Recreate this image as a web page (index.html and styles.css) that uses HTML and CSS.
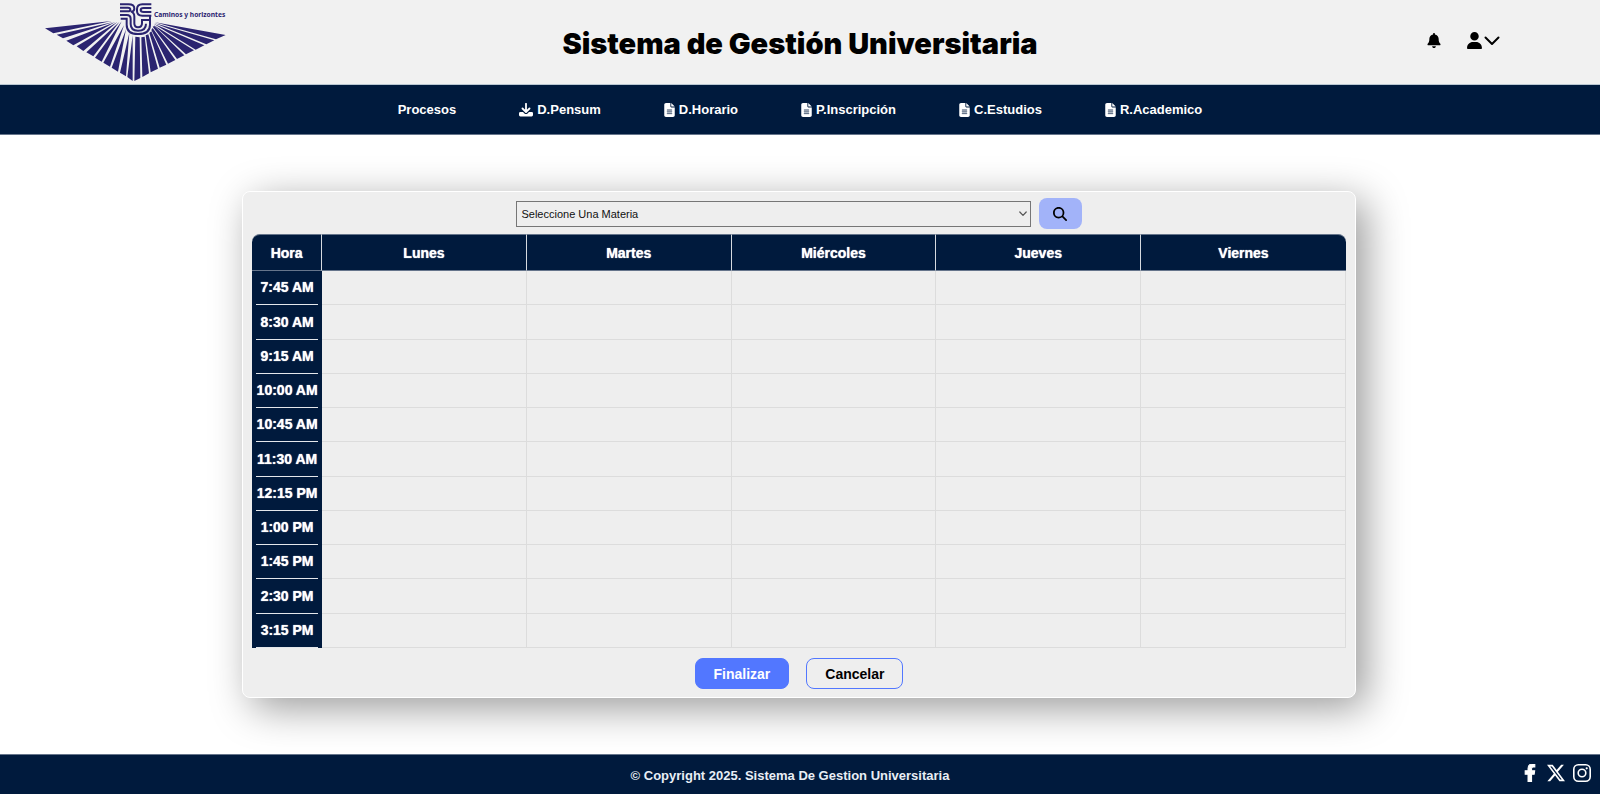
FILE: index.html
```html
<!DOCTYPE html>
<html lang="es">
<head>
<meta charset="utf-8">
<meta name="viewport" content="width=device-width, initial-scale=1">
<title>Sistema de Gestión Universitaria</title>
<link rel="stylesheet" href="styles.css">
</head>
<body>
<svg class="sprite" aria-hidden="true">
  <symbol id="file" viewBox="0 0 384 512"><path fill-rule="evenodd" d="M64 0C28.700 0 0 28.700 0 64V448c0 35.300 28.700 64 64 64H320c35.300 0 64-28.700 64-64V160H256c-17.700 0-32-14.300-32-32V0H64zM256 0V128H384L256 0z"/><path fill="#66758b" d="M112 240H272a16 16 0 0 1 0 32H112a16 16 0 0 1 0-32zM112 304H272a16 16 0 0 1 0 32H112a16 16 0 0 1 0-32zM112 368H272a16 16 0 0 1 0 32H112a16 16 0 0 1 0-32z" stroke="#66758b" stroke-width="12"/></symbol>
</svg>
<header class="top">
  <a class="logo" href="#" aria-label="Inicio">
    <svg viewBox="0 0 200 84" width="200" height="84">
      <g fill="#2b2470" transform="translate(-5 0) scale(.33333)">
        <path d="M45 85L245 63L70 100ZM80 104L250 66L99 115ZM109 122L256 66L130 136ZM140 139L262 66L160 153ZM169 157L268 66L190 169ZM195 173L275 64L215 185ZM220 188L282 76L240 200ZM245 203L288 88L264 215ZM270 218L298 98L288 229ZM292 231L308 106L308 243Z"/>
        <path d="M313 243L316 110L329 112L331 234ZM337 231L334 112L344 110L357 220ZM362 217L347 106L355 103L384 206ZM389 203L358 99L364 94L409 194ZM414 191L364 90L368 84L436 180ZM441 177L368 80L373 78L463 166ZM468 163L371 75L492 151ZM497 149L371 71L523 136ZM529 133L373 69L553 121ZM558 118L375 67L587 105Z"/>
        <g fill="none" stroke="#2b2470" stroke-width="6">
          <path d="M270 13H295Q313 13 313 26Q313 34 303 35Q313 38 313 50V70Q313 82 324 82Q336 82 336 70V60H361M270 23H294Q301 23 301 29Q301 34 293 34H270M270 45H290Q302 45 302 57V72Q302 92 324 92Q348 92 348 71"/>
          <path d="M364 13H337Q321 13 321 28V33Q321 47 337 47H364M364 24H341Q332 24 332 30Q332 36 341 36H364M360 47V74Q360 102 324 102Q290 102 290 74V56H272"/>
        </g>
        <text class="motto" x="372" y="50">Caminos y horizontes</text>
      </g>
    </svg>
  </a>
  <h1 class="title">Sistema de Gestión Universitaria</h1>
  <div class="tools">
    <button class="icon-button" type="button" aria-label="Notificaciones"><svg width="14" height="15" viewBox="0 0 448 512"><path d="M224 0c-17.700 0-32 14.300-32 32v19C119 66 64 131 64 208v19c0 47-17 92-48 128l-8 8c-8 10-10 23-5 34s16 19 29 19h384c13 0 24-7 29-19s3-25-5-34l-8-8c-31-36-48-81-48-128v-19c0-77-55-142-128-157V32c0-18-14-32-32-32zM288 448H160c0 36 29 64 64 64s64-28 64-64z"/></svg></button>
    <button class="icon-button" type="button" aria-label="Cuenta"><svg width="15" height="17" viewBox="0 0 448 512"><path d="M224 256a128 128 0 1 0 0-256 128 128 0 1 0 0 256zm-46 48C80 304 0 384 0 482c0 17 13 30 30 30h388c17 0 30-13 30-30 0-98-80-178-178-178z"/></svg><svg class="chevron" width="16" height="10" viewBox="0 0 16 10"><path class="line" d="M1.500 1.500L8 8L14.500 1.500" stroke-width="2"/></svg></button>
  </div>
</header>
<nav class="nav">
  <a href="#">Procesos</a>
  <a href="#"><svg width="14" height="14" viewBox="0 0 14 14"><path class="line" d="M7 .8V8M3.500 5.500L7 9L10.500 5.500" stroke-width="1.800"/><path d="M1.500 9H4l2 2h2l2-2h2.500A1.300 1.300 0 0 1 14 10.400v1.600a1.400 1.400 0 0 1-1.400 1.400H1.400A1.400 1.400 0 0 1 0 12v-1.600A1.400 1.400 0 0 1 1.500 9z"/></svg>D.Pensum</a>
  <a href="#"><svg width="11" height="14"><use href="#file"/></svg>D.Horario</a>
  <a href="#"><svg width="11" height="14"><use href="#file"/></svg>P.Inscripción</a>
  <a href="#"><svg width="11" height="14"><use href="#file"/></svg>C.Estudios</a>
  <a href="#"><svg width="11" height="14"><use href="#file"/></svg>R.Academico</a>
</nav>
<main class="main">
  <form class="card">
    <div class="search">
      <div class="picker">
        <select class="select" aria-label="Materia"><option>Seleccione Una Materia</option></select>
        <svg class="caret" width="8" height="6" viewBox="0 0 8 6"><path class="line" d="M.8 1L4 4.400L7.200 1" stroke-width="1.200"/></svg>
      </div>
      <button class="find" type="button" aria-label="Buscar"><svg width="14" height="14" viewBox="0 0 512 512"><path d="M416 208c0 45.900-14.900 88.300-40 122.700L502.600 457.400c12.500 12.500 12.500 32.800 0 45.300s-32.800 12.500-45.300 0L330.700 376c-34.400 25.200-76.800 40-122.700 40C93.100 416 0 322.900 0 208S93.100 0 208 0S416 93.100 416 208zM208 352a144 144 0 1 0 0-288 144 144 0 1 0 0 288z"/></svg></button>
    </div>
    <table class="schedule">
      <thead><tr><th class="hour" scope="col">Hora</th><th scope="col">Lunes</th><th scope="col">Martes</th><th scope="col">Miércoles</th><th scope="col">Jueves</th><th scope="col">Viernes</th></tr></thead>
      <tbody>
        <tr><th scope="row"><span>7:45 AM</span></th><td></td><td></td><td></td><td></td><td></td></tr>
        <tr><th scope="row"><span>8:30 AM</span></th><td></td><td></td><td></td><td></td><td></td></tr>
        <tr><th scope="row"><span>9:15 AM</span></th><td></td><td></td><td></td><td></td><td></td></tr>
        <tr><th scope="row"><span>10:00 AM</span></th><td></td><td></td><td></td><td></td><td></td></tr>
        <tr><th scope="row"><span>10:45 AM</span></th><td></td><td></td><td></td><td></td><td></td></tr>
        <tr><th scope="row"><span>11:30 AM</span></th><td></td><td></td><td></td><td></td><td></td></tr>
        <tr><th scope="row"><span>12:15 PM</span></th><td></td><td></td><td></td><td></td><td></td></tr>
        <tr><th scope="row"><span>1:00 PM</span></th><td></td><td></td><td></td><td></td><td></td></tr>
        <tr><th scope="row"><span>1:45 PM</span></th><td></td><td></td><td></td><td></td><td></td></tr>
        <tr><th scope="row"><span>2:30 PM</span></th><td></td><td></td><td></td><td></td><td></td></tr>
        <tr><th scope="row"><span>3:15 PM</span></th><td></td><td></td><td></td><td></td><td></td></tr>
      </tbody>
    </table>
    <div class="actions">
      <button class="action primary" type="button">Finalizar</button>
      <button class="action" type="button">Cancelar</button>
    </div>
  </form>
</main>
<footer class="footer">
  <p>© Copyright 2025. Sistema De Gestion Universitaria</p>
  <div class="social">
    <a href="#" aria-label="Facebook"><svg width="18" height="18" viewBox="-96 0 512 512"><path stroke="#fff" stroke-width="30" d="M279 288l14-92.700h-89v-60c0-25.300 12.400-50 52.200-50h40.400V6.300S260 0 225.400 0c-73.200 0-121 44.400-121 124.700v70.600H22.900V288h81.400v224h100V288z"/></svg></a>
    <a href="#" aria-label="X"><svg width="18" height="18" viewBox="0 0 16 16"><path d="M12.600.75h2.454l-5.360 6.142L16 15.250h-4.937l-3.867-5.070-4.425 5.070H.316l5.733-6.570L0 .75h5.063l3.495 4.633L12.601.75Zm-.86 13.028h1.360L4.323 2.145H2.865z"/></svg></a>
    <a href="#" aria-label="Instagram"><svg width="18" height="18" viewBox="0 0 18 18"><rect class="line" x=".8" y=".8" width="16.400" height="16.400" rx="4.500" stroke-width="1.600"/><circle class="line" cx="9" cy="9" r="3.800" stroke-width="1.600"/><circle cx="13.700" cy="4.300" r="1.100"/></svg></a>
  </div>
</footer>
</body>
</html>
```
FILE: styles.css
```css
* { box-sizing: border-box; }
body {
  margin: 0;
  min-height: 100vh;
  display: flex;
  flex-direction: column;
  background: #fff;
  font-family: "Liberation Sans", Arial, sans-serif;
}
svg { display: block; fill: currentColor; }
a { color: inherit; text-decoration: none; }
button { font-family: inherit; cursor: pointer; }
.sprite { position: absolute; width: 0; height: 0; }
.line { fill: none; stroke: currentColor; stroke-linecap: round; stroke-linejoin: round; }

.top {
  display: grid;
  grid-template-columns: 1fr auto 1fr;
  align-items: center;
  background: #f1f1f1;
  border-bottom: 1px solid #b9c7d2;
}
.logo { justify-self: start; margin-left: 35px; }
.motto { font: 700 20px "Noto Sans", sans-serif; }
.title {
  margin: 0;
  padding-top: 4px;
  font: 900 29px/34px Inter, sans-serif;
  color: #000;
}
.tools {
  justify-self: end;
  display: flex;
  align-items: center;
  gap: 26px;
  margin: 0 100px 4px 0;
}
.icon-button {
  display: flex;
  align-items: center;
  gap: 2px;
  padding: 0;
  border: 0;
  background: none;
  color: #000;
}
.chevron { margin-top: 2px; }

.nav {
  display: flex;
  justify-content: center;
  gap: 63px;
  height: 50px;
  align-items: center;
  background: #001a3d;
  border-bottom: 1px solid #66758b;
  color: #fff;
  font-size: 13px;
  font-weight: 700;
}
.nav a { display: flex; align-items: center; gap: 4px; }

.main {
  flex: 1;
  display: flex;
  justify-content: center;
  align-items: center;
  padding-right: 2px;
}
.card {
  width: 69.7%;
  padding: 6px 9px 8px;
  border: 1px solid #fff;
  border-radius: 8px;
  background: #eee;
  box-shadow: 10px 10px 40px rgba(0, 0, 0, .4);
}
.search {
  display: flex;
  justify-content: center;
  align-items: center;
  gap: 8px;
  margin-bottom: 5px;
}
.picker { position: relative; width: 47%; }
.select {
  display: block;
  width: 100%;
  height: 26px;
  padding: 0 4px;
  appearance: none;
  border: 1px solid #767676;
  border-radius: 0;
  background: #eee;
  color: #111;
  font: 11px "Liberation Sans", Arial, sans-serif;
}
.caret { position: absolute; right: 4px; top: 10px; color: #555; pointer-events: none; }
.find {
  display: grid;
  place-items: center;
  width: 43px;
  height: 31px;
  padding: 0;
  border: 0;
  border-radius: 8px;
  background: #a2b3f9;
  color: #000;
}

.schedule {
  width: 100%;
  height: 414px;
  table-layout: fixed;
  border-collapse: separate;
  border-spacing: 0;
  font-size: 14px;
  line-height: 16px;
}
.schedule th { padding: 0; background: #001a3d; color: #fff; text-shadow: 0 0 1px #fff; }
.schedule thead th {
  height: 37px;
  border-top: 1px solid #66758b;
  border-right: 1px solid #d5d9df;
  border-bottom: 1px solid #66758b;
}
.schedule thead th:first-child { border-top-left-radius: 8px; }
.schedule thead th:last-child { border-top-right-radius: 8px; border-right: 0; }
.schedule .hour { width: 70px; }
.schedule tbody th { padding: 0 4px; vertical-align: bottom; }
.schedule tbody span { display: block; padding: 8px 0 9px; border-bottom: 1px solid #e4e7eb; white-space: nowrap; }
.schedule td { border-right: 1px solid #dcdcdc; border-bottom: 1px solid #dcdcdc; }

.actions { display: flex; justify-content: center; gap: 17px; margin-top: 10px; }
.action {
  height: 31px;
  padding: 0 18px;
  border: 1px solid #5277ff;
  border-radius: 8px;
  background: #eee;
  color: #000;
  font-size: 14px;
  font-weight: 700;
}
.primary { background: #5277ff; color: #fff; }

.footer {
  display: grid;
  grid-template-columns: 1fr auto 1fr;
  align-items: center;
  height: 40px;
  background: #001a3d;
  border-top: 1px solid #66758b;
  color: #e8eef5;
  font-size: 13px;
  font-weight: 700;
}
.footer p { grid-column: 2; margin: 2px 20px 0 0; }
.social { justify-self: end; display: flex; gap: 8px; margin: 0 9px 4px 0; color: #fff; }
```
